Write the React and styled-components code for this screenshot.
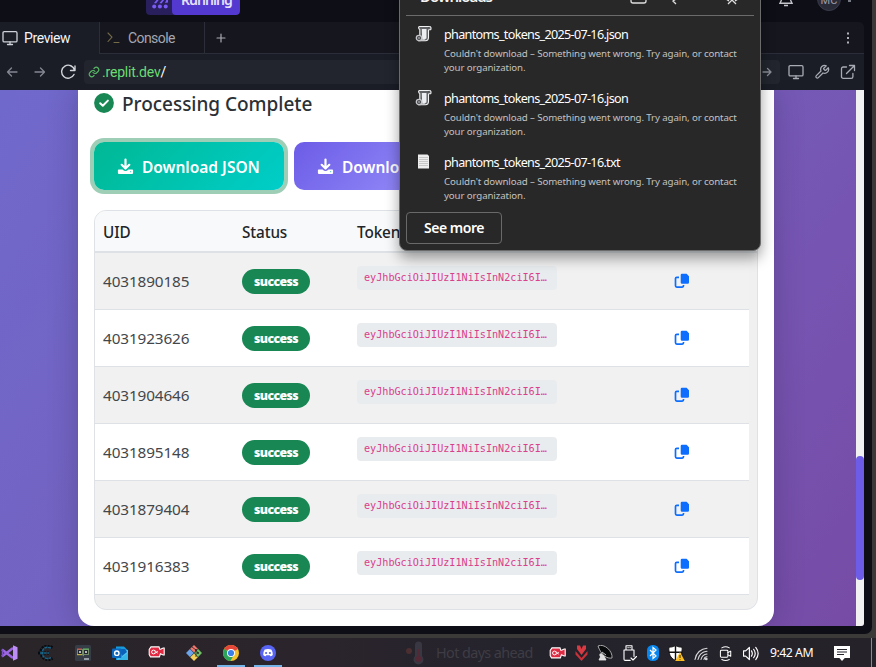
import React from 'react';
import styled, { createGlobalStyle } from 'styled-components';

const GlobalStyle = createGlobalStyle`
  * { box-sizing: border-box; }
  body { margin: 0; overflow: hidden; font-family: "Noto Sans", "Open Sans", sans-serif; }
  svg { display: block; flex: none; }
`;

const Screen = styled.div`
  width: 876px; height: 667px; overflow: hidden; position: relative;
  background: #3b3a39; display: flex; flex-direction: column;
`;
const Browser = styled.div`
  width: 872px; height: 634px; background: #0e0e17; flex: none;
  border-bottom-right-radius: 7px; display: flex; flex-direction: column; margin-bottom: 4px;
`;
const TopBar = styled.header`
  height: 22px; width: 100%; display: flex; align-items: flex-start; padding-left: 146px; overflow: hidden;
`;
const RunPill = styled.div`
  display: flex; width: 94px; height: 28px; margin-top: -13px; border-radius: 4px; overflow: hidden;
  background: #281f5c;
`;
const RunIcon = styled.div`
  width: 26px; padding: 11px 0 0 6px;
`;
const RunLabel = styled.div`
  flex: 1; background: #5339cf; border-radius: 4px; color: #e6e2fa; font: 600 14px/26px "Noto Sans", sans-serif;
  padding-left: 9px; letter-spacing: -0.95px;
`;
const TopRight = styled.div`
  margin-left: auto; display: flex; height: 22px; padding-right: 21px; align-items: flex-start;
`;
const Avatar = styled.div`
  width: 24px; height: 24px; margin: -13px 0 0 24px; border-radius: 50%; background: #2a2b38; border: 1px solid #3a3b4b;
  color: #9b9ca8; font: 11px/25px Roboto, sans-serif; text-align: center;
`;
const Caret = styled.i`
  width: 3px; height: 2px; background: #777985; margin-left: 7px;
`;
const Tabs = styled.nav`
  height: 32px; width: 864px; background: #16161f; border-top-right-radius: 5px; display: flex; flex: none;
`;
const Tab = styled.div`
  width: ${p => p.$w}px; height: 32px; display: flex; align-items: center; padding-left: ${p => p.$pad}px; gap: ${p => p.$gap}px;
  background: ${p => (p.$active ? '#1a1d26' : 'transparent')};
  border-right: 1px solid #2b2d38; border-bottom: ${p => (p.$active ? '0' : '1px')} solid #2b2d38;
  color: ${p => (p.$active ? '#f3f4f7' : '#a5a7b0')}; font: 14px/20px Roboto, sans-serif;
  letter-spacing: ${p => p.$ls}px;
`;
const TabRest = styled.div`
  flex: 1; display: flex; align-items: center; justify-content: space-between; padding: 0 11px 0 11px;
  border-bottom: 1px solid #2b2d38;
`;
const AddressBar = styled.div`
  width: 864px; height: 36px; flex: none; background: #1a1d26; display: flex; align-items: center; padding-left: 6px;
  svg.nav { margin-right: 15px; }
`;
const Address = styled.div`
  width: 696px; height: 24px; margin-left: -7px; margin-right: 8px; background: #22252e; border-radius: 4px; display: flex; align-items: center;
  padding: 0 8px 0 4px; color: #6bdc74; font: 14px/20px Roboto, sans-serif; letter-spacing: -.2px;
  span { margin-left: 2px; }
  b { font-weight: 400; color: #fff; }
  > svg:last-child { margin-left: auto; }
`;
const Tools = styled.div`
  display: flex; gap: 10px;
`;
const Page = styled.main`
  width: 864px; height: 536px; flex: none; display: flex; overflow: hidden; border-bottom-right-radius: 3px;
  background: linear-gradient(125deg, #7069cc 0%, #7460bd 45%, #7655b2 75%, #764ba5 100%);
`;
const Card = styled.section`
  width: 696px; height: 536px; margin-left: 78px; padding: 0 16px; background: #fff;
  border-radius: 0 0 16px 16px; box-shadow: 0 0 30px rgba(30, 20, 50, .25);
`;
const ScrollTrack = styled.div`
  width: 8px; height: 536px; margin-left: auto; background: #f1f1f1; padding-top: 366px;
`;
const Thumb = styled.div`
  width: 8px; height: 124px; border-radius: 4px; background: #6c5ce7;
`;
const Heading = styled.h2`
  margin: 0; height: 26px; display: flex; align-items: center; gap: 8px; color: #2b3035;
  font: 500 19px/26px "Noto Sans", sans-serif; letter-spacing: -.03px;
  span { padding-top: 1px; }
`;
const Actions = styled.div`
  display: flex; gap: 10px; margin-top: 26px;
`;
const DownloadButton = styled.button`
  width: 190px; height: 48px; border: 0; padding: 1px 0 0 23px; border-radius: 10px; display: flex; align-items: center; gap: 8px;
  color: #fff; font: 600 15.5px/22px "Noto Sans", sans-serif; letter-spacing: 0; white-space: nowrap;
  background: ${p => p.$bg}; box-shadow: ${p => (p.$focus ? '0 0 0 4px #9fceb7' : 'none')};
`;
const TableFrame = styled.div`
  width: 664px; height: 400px; margin-top: 20px; border: 1px solid #dee2e6; border-radius: 12px; overflow: hidden; background: #f0f0f0;
`;
const Row = styled.div`
  width: ${p => (p.$head ? 662 : 654)}px; height: ${p => (p.$head ? 42 : 57)}px; display: grid; grid-template-columns: 139px 115px 317px 1fr;
  padding: ${p => (p.$head ? 2 : 0)}px 0 0 8px; align-items: center; color: ${p => (p.$head ? '#212529' : '#43474b')};
  font: ${p => (p.$head ? 500 : 400)} 15.3px/22px "Noto Sans", sans-serif;
  letter-spacing: ${p => (p.$head ? -0.12 : -0.12)}px;
  background: ${p => (p.$head ? '#f8f9fa' : p.$odd ? '#f1f1f1' : '#fff')};
  border-bottom: ${p => (p.$head ? 2 : 1)}px solid #dee2e6;
`;
const Badge = styled.span`
  justify-self: start; width: 68px; height: 25px; border-radius: 13px; background: #198754; color: #fff;
  font: 900 12.3px/25px "Noto Sans", sans-serif; letter-spacing: -.6px; text-align: center;
`;
const Token = styled.code`
  width: 200px; height: 24px; margin-top: -6px; padding-left: 7px; border-radius: 4px; background: #e9ecef; color: #d9408b;
  font: 10.15px/23px "DejaVu Sans Mono", monospace; letter-spacing: 0; white-space: nowrap;
`;
const Popup = styled.aside`
  position: absolute; left: 399px; top: -20px; width: 362px; height: 271px; background: #282828; border: 1px solid #6b6b6b;
  border-radius: 8px; box-shadow: 0 7px 14px rgba(0, 0, 0, .38); padding: 0 6px; display: flex; flex-direction: column;
`;
const PopupHead = styled.div`
  height: 35px; border-bottom: 1px solid #6b6b6b; display: flex; padding: 5px 14px 0; color: #f4f4f4;
  font: 600 15px/20px "Noto Sans", sans-serif; letter-spacing: -1px;
  div { margin-left: auto; display: flex; }
`;
const Item = styled.div`
  height: 64px; display: flex; padding: 9px 0 0 9px; gap: 11px;
`;
const FileName = styled.div`
  margin-top: 1px; font: 12.6px/18px "Noto Sans", sans-serif; color: #fff; letter-spacing: ${p => p.$ls}px; white-space: nowrap;
`;
const FileError = styled.div`
  margin-top: 3px; color: #c2c2c2; font: 9.7px/14px "Noto Sans", sans-serif; white-space: nowrap; letter-spacing: -.11px;
`;
const FileText = styled.div``;
const More = styled.button`
  width: 96px; height: 32px; margin-top: 4px; padding: 0; border: 1px solid #696969; border-radius: 4px; background: transparent;
  color: #fff; font: 600 14px/20px "Noto Sans", sans-serif; letter-spacing: -.45px; flex: none;
`;
const Taskbar = styled.footer`
  height: 29px; width: 876px; background: linear-gradient(90deg, #292528, #2b242c 35%, #24232c 60%, #252229); display: flex; flex: none;
`;
const Apps = styled.div`
  display: flex; padding-left: 0; width: 403px;
`;
const AppSlot = styled.div`
  width: ${p => p.$w}px; height: 29px; padding: 7px 0 0 ${p => p.$pad}px;
  display: flex; flex-direction: column; justify-content: space-between;
`;
const Running = styled.i`
  width: 28px; height: 2px; background: #74b4e8; margin-left: -6px;
`;
const Weather = styled.div`
  display: flex; align-items: center; width: 146px; color: #3e3c44; font: 14.4px/22px "Noto Sans", sans-serif; letter-spacing: -.6px; white-space: nowrap; gap: 9px;
`;
const Tray = styled.div`
  display: flex; align-items: center; gap: 9px; height: 30px;
`;
const Clock = styled.time`
  margin-left: 1px; margin-right: 8px; width: 46px; color: #fff; font: 12.3px/20px "Noto Sans", sans-serif; letter-spacing: -.5px; white-space: nowrap;
`;
const Edge = styled.i`
  margin-left: auto; width: 5px; height: 29px; border-left: 1px solid #8b898e;
`;

const Line = ({ size = 16, color = '#a9abb4', sw = 1.3, className, children, vb = '0 0 16 16' }) => (
  <svg className={className} width={size} height={size} viewBox={vb} fill="none" stroke={color} strokeWidth={sw} strokeLinecap="round" strokeLinejoin="round">{children}</svg>
);
const Monitor = ({ color }) => <Line color={color}><rect x="1" y="1.7" width="14" height="10.2" rx="1.2" /><path d="M8 12v2.4M5.5 14.5h5" /></Line>;
const DownloadIcon = () => (
  <svg width="17" height="17" viewBox="0 0 17 17" fill="none" stroke="#fff" strokeWidth="2.2" strokeLinecap="round" strokeLinejoin="round">
    <path d="M8.5 1.500v8.500M4.700 6.800l3.800 3.700 3.800-3.700" /><path d="M1.700 12.200h3.600c1.500 2 4.900 2 6.400 0h3.600v2.900H1.700z" fill="#fff" strokeWidth="1.600" /><path d="M13.600 13.700h.1" stroke="#16bdb0" strokeWidth="1" />
  </svg>
);
const CopyIcon = () => (
  <svg width="16" height="16" viewBox="0 0 16 16">
    <path d="M5 4.300H2.800a1.300 1.300 0 0 0-1.300 1.300v7.200a1.300 1.300 0 0 0 1.300 1.300h5.400a1.300 1.300 0 0 0 1.300-1.300v-.7" fill="none" stroke="#0d6efd" strokeWidth="1.700" />
    <path d="M8 .8h4.600L15 3.200v6.300a1.300 1.300 0 0 1-1.300 1.300H8a1.300 1.300 0 0 1-1.300-1.300V2.100A1.300 1.300 0 0 1 8 .8z" fill="#0d6efd" />
  </svg>
);
const ScriptIcon = () => (
  <svg width="18" height="18" viewBox="0 0 18 18">
    <path d="M4.500 1.500h10c1.500 0 1.800 1.500 1.300 3.200h-2.300v7.600c0 2.400-1 3.400-3 3.400H3.500c1-.6 1.300-1.400 1.300-3.100V4.500C3.300 4 3.300 1.500 4.500 1.500z" fill="#626367" stroke="#f1f1f3" strokeWidth="1.100" strokeLinejoin="round" />
    <path d="M6.800 4h4.700v9.300l-2 1.500H7.200z" fill="#eceef1" />
    <path d="M13 4.500V3.500c0-1 .7-1.300 1.500-1.300" fill="none" stroke="#4b4c4f" strokeWidth=".8" />
    <circle cx="4" cy="13" r="2.700" fill="#45464a" stroke="#c5c6ca" strokeWidth="1.300" /><circle cx="4" cy="13" r=".8" fill="#d5d5d7" />
  </svg>
);
const TextIcon = () => (
  <svg width="18" height="18" viewBox="0 0 18 18"><path d="M3 1.500h9.500L14 3v12.500H3z" fill="#eee" /><path d="M4 4.500h9M4 6.500h9M4 8.500h9M4 10.500h9M4 12.500h9" stroke="#bebebe" strokeWidth=".8" /></svg>
);
const Camera = () => (
  <svg width="17" height="14" viewBox="0 0 17 14"><path d="M3 1.900h8l.8 2.400h.8l2.600-1.300h1v7h-1l-2.800-1.300-1 3.200H2.500L1.200 9.500v-5z" fill="#df2a43" stroke="#fff" strokeWidth="1.100" />
    <circle cx="5.500" cy="7" r="1.900" fill="none" stroke="#fff" strokeWidth="1" /><path d="M7.400 6l2.400 2.200M7.600 8.200l2.200-2" stroke="#fff" strokeWidth=".9" /></svg>
);
const icon = { width: 16, height: 16, viewBox: '0 0 16 16' };
const VisualStudio = () => (
  <svg {...icon} width="17"><path d="M.5 4.500L11.500 13M.5 11.500L11.500 3" fill="none" stroke="#9b65e4" strokeWidth="2.500" /><path d="M1.100 4v8" stroke="#8051c6" strokeWidth="1.700" /><path d="M11.500.3l4.500 2v11.400l-4.500 2z" fill="#bd8df6" /></svg>
);
const CheatIcon = () => (
  <svg {...icon}><path d="M14.500 2.500C7-1 2 3 3 8c.4 6 6 8 11.500 5.400M0 8h12" fill="none" stroke="#080c12" strokeWidth="3" strokeDasharray="2 1" /><path d="M13 3C7 1 4.200 4 4.200 8s4 7 8.800 4.600M2 8h9" fill="none" stroke="#196487" strokeWidth="1.500" strokeDasharray="3 .6" /></svg>
);
const TerminalApp = () => (
  <svg {...icon}><rect width="16" height="16" rx="1.500" fill="#363d47" /><path d="M2 4h12v6H9v1.500L7 10H2z" fill="#738d69" /><path d="M3 5h4v4H3zM9 5h4v4H9z" fill="#232830" /><path d="M2 4h5" stroke="#e34b4b" /><path d="M8 4h6" stroke="#60ba5e" /><path d="M2 9.700h5" stroke="#d9b73c" /><circle cx="5" cy="7" r=".9" fill="#fff" /><circle cx="11" cy="7" r=".9" fill="#fff" /><path d="M9 14h5" stroke="#b7bcc2" strokeWidth="1.500" /></svg>
);
const Outlook = () => (
  <svg {...icon}><path d="M4 1.500h8l4 4V15H4z" fill="#159bdd" /><path d="M8 6l8-1v10H5z" fill="#50c5ef" /><path d="M6 15l10-7v7z" fill="#35b5e6" /><path d="M7 4h6l2 3-5 4z" fill="#0c62b9" /><rect y="3.500" width="9.500" height="9.500" rx="1" fill="#0b68bd" /><circle cx="4.800" cy="8.200" r="2.200" fill="none" stroke="#fff" strokeWidth="1.400" /></svg>
);
const GitDiamond = () => (
  <svg {...icon}><path d="M8 0l3.800 3.800L8 7.600 4.200 3.800z" fill="#ef776d" /><path d="M3.900 4.100L7.800 8l-3.900 3.900L0 8z" fill="#6da4e9" /><path d="M12.100 4.100L16 8l-3.900 3.900L8.200 8z" fill="#70bf61" /><path d="M8 8.400l3.800 3.800L8 16l-3.800-3.800z" fill="#f2d05a" /><path d="M6 2l4 3v7M10 5l2 3" fill="none" stroke="#292528" strokeWidth=".8" /><circle cx="10" cy="5" r="1" fill="#292528" /><circle cx="12" cy="8" r="1" fill="#292528" /></svg>
);
const Chrome = () => (
  <svg {...icon}><circle cx="8" cy="8" r="8" fill="#f5c12d" /><path d="M8 8L1.100 4A8 8 0 0 1 14.900 4z" fill="#e4463a" /><path d="M8 8L1.100 4a8 8 0 0 0 6.200 12L11 10z" fill="#2ca55a" /><circle cx="8" cy="8" r="4" fill="#fff" /><circle cx="8" cy="8" r="3.100" fill="#3b7fe8" /></svg>
);
const Discord = () => (
  <svg {...icon}><circle cx="8" cy="8" r="8" fill="#5865f2" /><path d="M4.700 4.500Q8 3.300 11.300 4.500q1.700 2.400 1.500 5.600-1.300 1.200-2.500 1.200l-.6-1H6.300l-.6 1q-1.200 0-2.500-1.200-.2-3.200 1.500-5.600z" fill="#fff" /><circle cx="6.100" cy="8" r="1.100" fill="#5865f2" /><circle cx="9.900" cy="8" r="1.100" fill="#5865f2" /></svg>
);
const Arrows = () => <svg width="13" height="16" viewBox="0 0 13 16"><path d="M2 .5h3L6.500 4 8 .5h3v3.500L6.500 10 2 4z" fill="#d63a42" /><path d="M.5 6l6 7 6-7v3.500l-6 6.500-6-6.500z" fill="#c93238" /></svg>;
const Dish = () => <svg {...icon}><path d="M1 1c6-3 15 5 14 12-5 1-11-3-14-12z" fill="#08090b" stroke="#a7a7a7" /><path d="M4 9l3 2 2 4H2l1.500-3zM5 7l4 3" fill="#ddd" stroke="#eee" strokeWidth=".8" /><circle cx="4" cy="10" r="1.700" fill="#ddd" /></svg>;
const Usb = () => <Line color="#fff" sw={1.1}><path d="M4 5V.7h6V5M6 2.600h.2M8 2.600h.2M2 5h10v6.500M2 5v9.200q0 1.200 1.200 1.200h5M9 13l2 2 3.500-3.500" /></Line>;
const Bluetooth = () => <svg width="12" height="16" viewBox="0 0 12 16"><rect width="12" height="16" rx="5.500" fill="#0786ef" /><path d="M3 5l6 6-3 2.500v-11L9 5l-6 6" fill="none" stroke="#fff" strokeWidth="1.200" /></svg>;
const Shield = () => <svg width="17" height="17" viewBox="0 0 17 17"><path d="M7.500.5C5 2 3 2 .8 2.200.7 9 2 13 7.500 15.500 13 13 14.200 9 14.200 2.200 12 2 10 2 7.500.5z" fill="#fff" stroke="#111" /><path d="M7.500 1v14M1 7.300h13" stroke="#111" strokeWidth="1.400" /><path d="M12 7l4.800 9H7.200z" fill="#fbbd20" /><path d="M12 10v3M12 14.300v.8" stroke="#3a2c00" /></svg>;
const Wifi = () => <Line color="#d8d8dc" sw={1.1}><path d="M1 14.500C2 8 7 3.500 13 3.200M4 14.500C5 10 8 6.500 13 6.200M7 14.500c.7-3 3-5.300 6-5.500M10 14.500c.3-1.500 1.500-2.700 3-2.700" /><circle cx="12.300" cy="14" r=".8" fill="#fff" /></Line>;
const MeetIcon = () => <Line color="#fff" sw={1.1} size={15} vb="1 0 16 16"><rect x="2.500" y="4.500" width="8" height="7.500" rx="1" /><path d="M10.500 7l3-1.500V11l-3-1.500M4 2Q8-.2 12 2M4 14.400q4 2 8 0" /></Line>;
const Volume = () => <Line color="#fff" sw={1.1} size={17} vb="1 0 16 16"><path d="M1.500 5.500h2L7 2.300v11.400L3.500 10.500h-2zM9 5.500q1.500 2.500 0 5M11 4q3 4 0 8M13 2.300q4.500 5.700 0 11.400" /></Line>;
const Notice = () => <svg width="18" height="17" viewBox="0 0 18 17"><path d="M1 1h16v12h-5.200L9 16l-2.600-3H1z" fill="#fff" /><path d="M4 4.500h10M4 7h10M4 9.500h7" stroke="#27242c" strokeWidth="1.100" /></svg>;

const uids = ['4031890185', '4031923626', '4031904646', '4031895148', '4031879404', '4031916383'];
const files = [
  { name: 'phantoms_tokens_2025-07-16.json', Icon: ScriptIcon },
  { name: 'phantoms_tokens_2025-07-16.json', Icon: ScriptIcon },
  { name: 'phantoms_tokens_2025-07-16.txt', Icon: TextIcon },
];
const apps = [
  { Icon: VisualStudio, w: 38, pad: 1 }, { Icon: CheatIcon, w: 37, pad: 0 }, { Icon: TerminalApp, w: 37, pad: 0 },
  { Icon: Outlook, w: 36, pad: 0 }, { Icon: Camera, w: 38, pad: 0 }, { Icon: GitDiamond, w: 37, pad: 0 },
  { Icon: Chrome, w: 37, pad: 0, run: true }, { Icon: Discord, w: 37, pad: 0, run: true },
];

export default function App() {
  return (
    <Screen>
      <GlobalStyle />
      <Browser>
        <TopBar>
          <RunPill>
            <RunIcon><svg width="16" height="20" viewBox="0 -1.500 16 20" fill="#7a5cf5">
              <circle cx="2.200" cy="6.900" r="2" /><circle cx="7.900" cy="6.900" r="2" /><circle cx="13.700" cy="6.900" r="2" />
              <path d="M2 3.500L5 0h2L4 4zM7.500 3.500L10.500 0h2l-3 4zM13 3.500L14.500 0H16v3z" />
            </svg></RunIcon>
            <RunLabel>Running</RunLabel>
          </RunPill>
          <TopRight>
            <svg width="14" height="7" viewBox="0 0 14 7" fill="none" stroke="#c5c6cc" strokeWidth="1.400"><path d="M2.500 0L1 3.200h12L11.500 0M5 5.500h4" /></svg>
            <Avatar>MC</Avatar><Caret />
          </TopRight>
        </TopBar>
        <Tabs>
          <Tab $active $w={100} $pad={2} $gap={6} $ls={-0.38}><Monitor color="#cfd1d8" />Preview</Tab>
          <Tab $w={105} $pad={7} $gap={8} $ls={-0.58}>
            <Line size={13} color="#766b48" vb="0 0 13 13" sw={1.1}><path d="M1 2l4 4.200-4 4.300M7 11.500h5" /></Line>Console
          </Tab>
          <TabRest>
            <Line size={10} vb="0 0 10 10" sw={1.2}><path d="M5 1v8M1 5h8" /></Line>
            <svg width="10" height="14" viewBox="0 0 10 14" fill="#b1b3bb"><path d="M4 1.500h2v2H4zM4 6h2v2H4zM4 10.500h2v2H4z" /></svg>
          </TabRest>
        </Tabs>
        <AddressBar>
          <Line className="nav" size={12} color="#858792" vb="0 0 12 12"><path d="M11 6H1.500M5.500 2l-4 4 4 4" /></Line>
          <Line className="nav" size={12} color="#858792" vb="-1 0 12 12"><path d="M1 6h9M6.500 2l4 4-4 4" /></Line>
          <Line className="nav" color="#d3d5da" sw={1.4}><path d="M14.500 6.300A6.500 6.500 0 1 0 14 10.500M15 2v4.500h-4.500" /></Line>
          <Address>
            <Line size={12} vb="0 0 24 24" color="#58b965" sw={2.3}><path d="M10 13a5 5 0 0 0 7.500.5l3-3a5 5 0 0 0-7-7L11.800 5.200M14 11a5 5 0 0 0-7.500-.5l-3 3a5 5 0 0 0 7 7l1.700-1.700" /></Line>
            <span>.replit.dev<b>/</b></span>
            <Line size={10} color="#8b8d97" vb="0 0 10 10"><path d="M1 5h7.500M5.500 1.500L9 5 5.500 8.500" /></Line>
          </Address>
          <Tools>
            <Monitor color="#a9abb4" />
            <Line vb="0 0 24 24" sw={1.9}><path d="M14.700 6.300a1 1 0 0 0 0 1.400l1.600 1.600a1 1 0 0 0 1.400 0l3.700-3.700a6 6 0 0 1-7.900 7.900l-7 7a2.100 2.100 0 0 1-3-3l7-7a6 6 0 0 1 7.900-7.900z" /></Line>
            <Line><path d="M6.500 3H3.200A1.700 1.700 0 0 0 1.500 4.700v8A1.700 1.700 0 0 0 3.200 14.400h8a1.700 1.700 0 0 0 1.700-1.700V9.500M9.500 1.500h5v5M14.300 1.700L6.500 9.500" /></Line>
          </Tools>
        </AddressBar>
        <Page>
          <Card>
            <Heading>
              <svg width="20" height="20" viewBox="0 0 20 20"><circle cx="10" cy="10" r="9.900" fill="#198754" /><path d="M6.200 10.200l2.600 2.600L13.900 7.600" fill="none" stroke="#fff" strokeWidth="2" strokeLinecap="round" strokeLinejoin="round" /></svg>
              <span>Processing Complete</span>
            </Heading>
            <Actions>
              <DownloadButton $focus $bg="linear-gradient(135deg, #00b894, #00cec9)"><DownloadIcon />Download JSON</DownloadButton>
              <DownloadButton $bg="linear-gradient(135deg, #6c5ce7, #a29bfe)"><DownloadIcon />Download TXT</DownloadButton>
            </Actions>
            <TableFrame>
              <Row $head><span>UID</span><span>Status</span><span>Token</span></Row>
              {uids.map((uid, i) => (
                <Row key={uid} $odd={i % 2 === 0}>
                  <span>{uid}</span><Badge>success</Badge><Token>eyJhbGciOiJIUzI1NiIsInN2ciI6I…</Token><span><CopyIcon /></span>
                </Row>
              ))}
            </TableFrame>
          </Card>
          <ScrollTrack><Thumb /></ScrollTrack>
        </Page>
      </Browser>
      <Taskbar>
        <Apps>
          {apps.map(({ Icon, w, pad, run }, i) => <AppSlot key={i} $w={w} $pad={pad}><Icon />{run && <Running />}</AppSlot>)}
        </Apps>
        <Weather>
          <svg width="24" height="24" viewBox="0 0 24 24"><circle cx="6" cy="10" r="3" fill="#4b2f30" /><path d="M12 4a3.500 3.500 0 0 1 7 0v11a5 5 0 1 1-7 0z" fill="#383742" /><path d="M15.500 8v9" stroke="#542936" strokeWidth="2" /><circle cx="15.500" cy="18" r="3" fill="#542936" /></svg>
          Hot days ahead
        </Weather>
        <Tray>
          <Camera /><Arrows /><Dish /><Usb /><Bluetooth /><Shield /><Wifi /><MeetIcon /><Volume />
          <Clock>9:42 AM</Clock><Notice />
        </Tray>
        <Edge />
      </Taskbar>
      <Popup>
        <PopupHead>Downloads
          <div>
            <svg width="122" height="25" viewBox="0 0 122 25" fill="none" stroke="#dedede" strokeWidth="1.300"><path d="M13 9v6q0 2 2 2h11q2 0 2-2V9M58 13l-3 2 3 3M110 18l4-4 4 4M108 13l3 2M120 13l-3 2" /></svg>
          </div>
        </PopupHead>
        {files.map(({ name, Icon }, i) => (
          <Item key={i}><Icon />
            <FileText><FileName $ls={-0.68}>{name}</FileName><FileError>Couldn't download – Something went wrong. Try again, or contact<br />your organization.</FileError></FileText>
          </Item>
        ))}
        <More>See more</More>
      </Popup>
    </Screen>
  );
}
